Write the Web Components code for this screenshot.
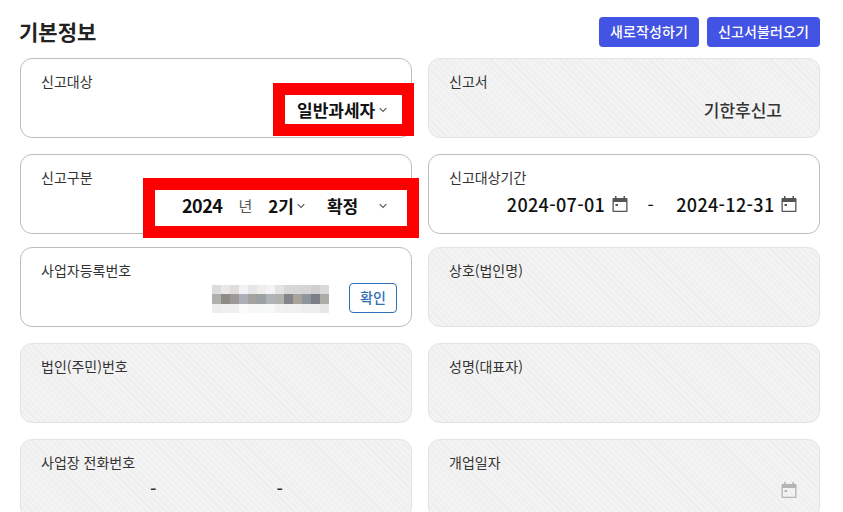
<!DOCTYPE html>
<html lang="ko">
<head>
<meta charset="utf-8">
<title>기본정보</title>
<style>
  html, body { margin: 0; height: 100%; overflow: hidden; background: #fff; }
  body { font-family: "Noto Sans CJK KR", "Noto Sans", sans-serif; color: #222; }
</style>
</head>
<body>
<tax-form>
  <section-head slot="head" title="기본정보">
    <action-button>새로작성하기</action-button>
    <action-button>신고서불러오기</action-button>
  </section-head>

  <form-row>
    <info-card label="신고대상">
      <mark-box style="left:252px;top:24px;width:141px;height:53px">
        <pick-value>일반과세자<chev-icon></chev-icon></pick-value>
      </mark-box>
    </info-card>
    <info-card label="신고서" disabled><card-value style="padding-right:23px">기한후신고</card-value></info-card>
  </form-row>

  <form-row squeeze>
    <info-card label="신고구분">
      <mark-box style="left:122px;top:23px;width:276px;height:60px">
        <period-pick></period-pick>
      </mark-box>
    </info-card>
    <info-card label="신고대상기간">
      <date-range from="2024-07-01" to="2024-12-31"></date-range>
    </info-card>
  </form-row>

  <form-row>
    <info-card label="사업자등록번호">
      <card-value>
        <mosaic-block></mosaic-block>
        <confirm-button>확인</confirm-button>
      </card-value>
    </info-card>
    <info-card label="상호(법인명)" disabled></info-card>
  </form-row>

  <form-row>
    <info-card label="법인(주민)번호" disabled></info-card>
    <info-card label="성명(대표자)" disabled></info-card>
  </form-row>

  <form-row>
    <info-card label="사업장 전화번호" disabled><phone-dashes></phone-dashes></info-card>
    <info-card label="개업일자" disabled><card-value style="padding-right:7px"><cal-icon faded></cal-icon></card-value></info-card>
  </form-row>
</tax-form>

<script>
function define(name, css, html, setup) {
  customElements.define(name, class extends HTMLElement {
    constructor() {
      super();
      this.attachShadow({ mode: "open" }).innerHTML =
        `<style>${css}</style>` + (typeof html === "function" ? html(this) : html);
    }
    connectedCallback() {
      if (setup) setup(this);
    }
  });
}

define("tax-form",
  `:host { display: block; padding: 17px 23px 0 20px; }
   .rows { display: flex; flex-direction: column; gap: 16px; }`,
  `<slot name="head"></slot><div class="rows"><slot></slot></div>`);

define("section-head",
  `:host { display: flex; justify-content: space-between; align-items: center; height: 30px; margin-bottom: 11px; }
   h2 { margin: -2px 0 0 -1px; font-size: 21px; font-weight: 700; color: #222; line-height: 30px; }
   .actions { display: flex; gap: 8px; }`,
  `<h2></h2><div class="actions"><slot></slot></div>`,
  el => { el.shadowRoot.querySelector("h2").textContent = el.getAttribute("title"); });

define("action-button",
  `:host { display: block; }
   button { display: block; height: 30px; padding: 0 11px 2px; border: 0; border-radius: 4px; background: #4353e3;
     color: #fff; font: 500 14px "Noto Sans CJK KR", sans-serif; letter-spacing: .12px; }`,
  `<button><slot></slot></button>`);

define("form-row",
  `:host { display: grid; grid-template-columns: 392px 392px; gap: 16px; }
   :host([squeeze]) { margin-bottom: -3px; }`,
  `<slot></slot>`);

define("info-card",
  `:host { display: block; position: relative; box-sizing: border-box; height: 80px; padding: 13px 14px 0 20px;
     border: 1px solid #bdbdbd; border-radius: 12px; background: #fff; }
   :host([disabled]) { border-color: #e2e2e2;
     background: repeating-linear-gradient(45deg, #f3f3f3 0 3px, #eeeeee 3px 4.5px); }
   .label { font-size: 14px; line-height: 18px; color: #333; }`,
  el => `<div class="label">${el.getAttribute("label")}</div><slot></slot>`);

define("card-value",
  `:host { display: flex; justify-content: flex-end; align-items: center; gap: 20px; margin-top: 4px; height: 30px;
     font-size: 17px; font-weight: 500; color: #333; }`,
  `<slot></slot>`);

define("mark-box",
  `:host { display: flex; align-items: center; position: absolute; box-sizing: border-box;
     border: 12px solid #f00; background: #fff; }`,
  `<slot></slot>`);

define("pick-value",
  `:host { display: flex; align-items: center; gap: 4px; padding-left: 12px; font-size: 17px; font-weight: 600; color: #111; }
   ::slotted(chev-icon) { margin-top: 1px; }`,
  `<slot></slot>`);

define("chev-icon",
  `:host { display: inline-flex; }`,
  `<svg width="8" height="6" viewBox="0 0 8 6"><path d="M.7 1.2 4 4.5l3.3-3.3" fill="none" stroke="#555" stroke-width="1.1"/></svg>`);

define("period-pick",
  `:host { display: flex; align-items: center; padding: 0 0 6px 27px; font-size: 17px; font-weight: 600; color: #111; }
   .year { font-size: 18px; letter-spacing: -.5px; }
   .unit { margin: 0 16px; font-size: 15px; font-weight: 400; color: #555; }
   .state { margin-left: 22px; width: 49px; }
   chev-icon { margin: 2px 0 0 3px; }`,
  `<span class="year">2024</span><span class="unit">년</span><span>2기</span><chev-icon></chev-icon><span class="state">확정</span><chev-icon></chev-icon>`);

define("date-range",
  `:host { display: flex; justify-content: flex-end; align-items: center; margin-top: 3px; height: 30px; padding-right: 7px;
     font-size: 18px; font-weight: 500; color: #111; letter-spacing: .33px; }
   .dash { margin: 0 22px 0 19px; font-weight: 400; }
   cal-icon { margin-left: 5.5px; }`,
  el => `<span>${el.getAttribute("from")}</span><cal-icon></cal-icon><span class="dash">-</span><span>${el.getAttribute("to")}</span><cal-icon></cal-icon>`);

define("cal-icon",
  `:host { display: inline-flex; color: #555; }
   :host([faded]) { color: #b4b4b4; }`,
  `<svg width="18" height="18" viewBox="0 0 18 18" fill="currentColor"><path d="M4 1h1.5v2h7V1H14v2h1.5c.6 0 1 .4 1 1v12c0 .6-.4 1-1 1h-13c-.6 0-1-.4-1-1V4c0-.6.4-1 1-1H4zM2.8 7v8.7h12.4V7z"/><rect x="4.5" y="9" width="2.5" height="2"/></svg>`);

define("confirm-button",
  `:host { display: block; }
   button { display: block; box-sizing: border-box; width: 48px; height: 30px; padding: 0 0 2px; background: #fff;
     border: 1px solid #2f6db5; border-radius: 4px; color: #2f6db5; font: 500 14px "Noto Sans CJK KR", sans-serif; }`,
  `<button><slot></slot></button>`);

define("mosaic-block",
  `:host { display: grid; grid-template-columns: repeat(13, 9px); grid-auto-rows: 9.4px; margin-top: 2px; filter: blur(.4px); }
   i { display: block; }`,
  () => {
    const rows = [
      "dcdcdc e8e8e8 dfdcd9 f0f2f6 e6e6e8 f0eeea f2f4f8 e6e4e2 d8d8d8 d6d6d6 d4d4d4 cfcfcf dadada",
      "aeb0ae 8f8b86 9b9a96 adafb8 a5a19d 9ba2a6 b0b4b4 b0b2b0 83858a a8a299 8f969b 7c7e85 aeaca6",
      "ededed f0f0f0 efefef fbfbfb f6f6f6 f6f8f8 f7f8fa f2f2f2 f0f0f0 f0f0f0 eeeeee eeeeee e6e6e6"
    ];
    return rows.join(" ").split(" ").map(c => `<i style="background:#${c}"></i>`).join("");
  });

define("phone-dashes",
  `:host { display: flex; margin-top: 2px; height: 30px; align-items: center; font-size: 18px; font-weight: 500; color: #333; }
   .first { margin-left: 109px; }
   .second { margin-left: 120px; }`,
  `<span class="first">-</span><span class="second">-</span>`);
</script>
</body>
</html>
